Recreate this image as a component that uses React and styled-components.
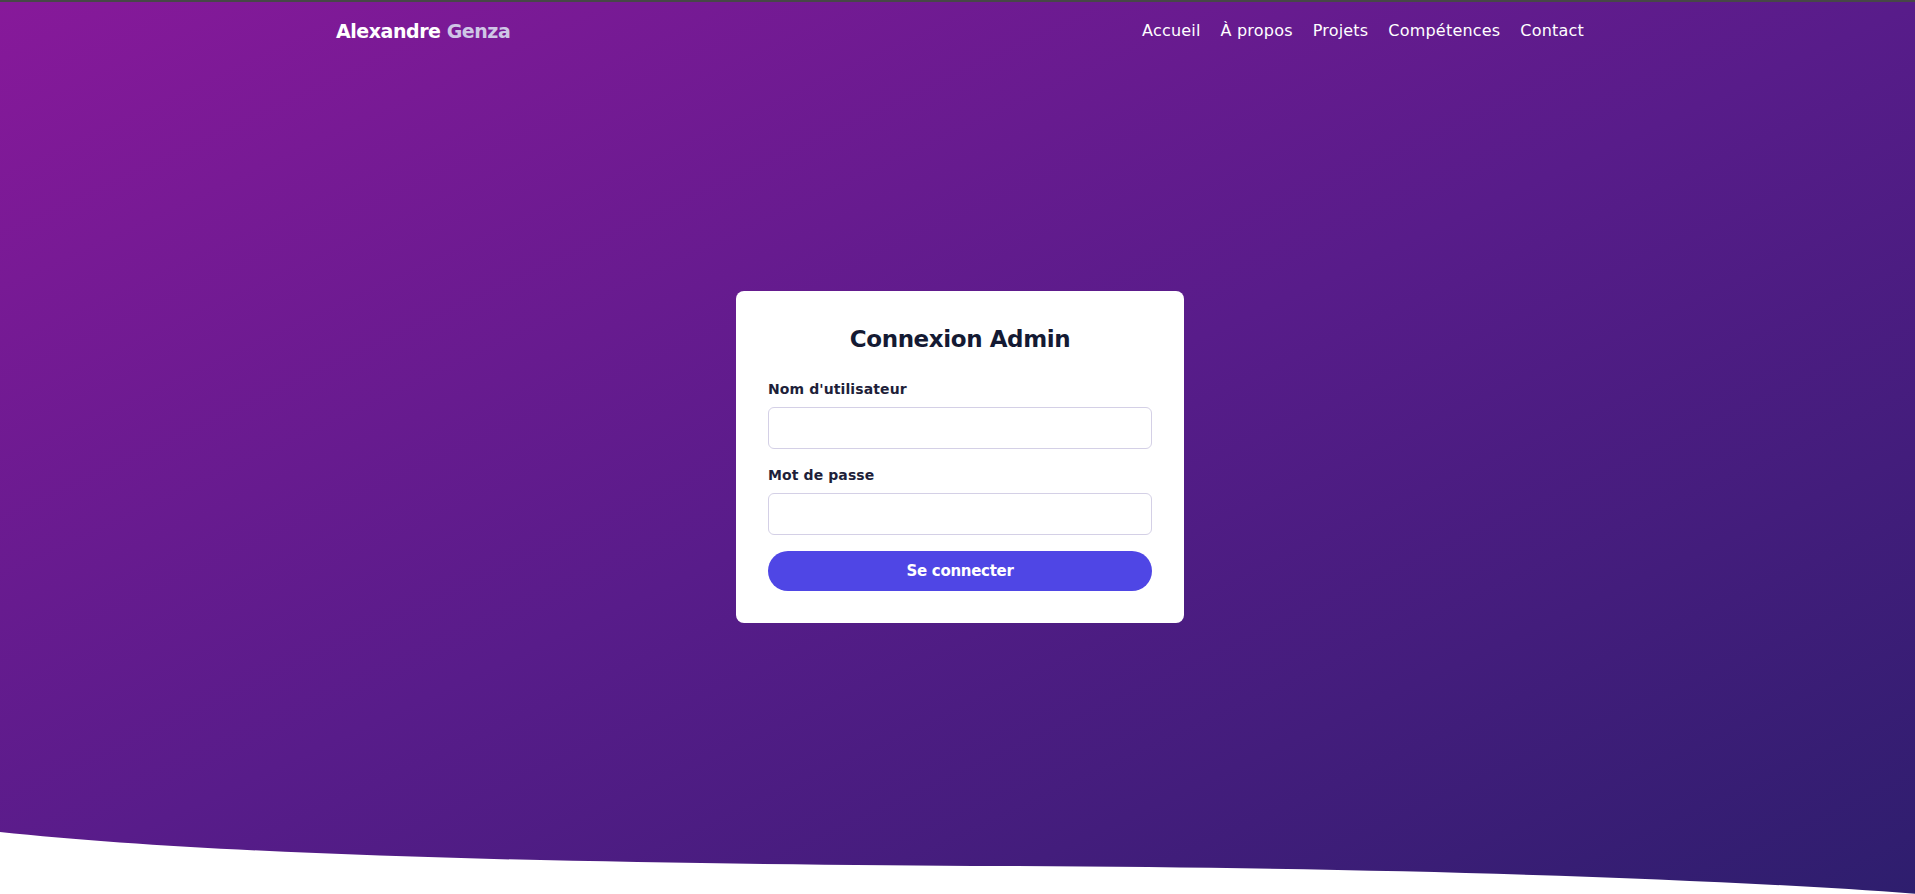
import React from 'react';
import styled, { createGlobalStyle } from 'styled-components';

const NAV_ITEMS = ['Accueil', 'À propos', 'Projets', 'Compétences', 'Contact'];

const GlobalStyle = createGlobalStyle`
  * { box-sizing: border-box; }
  html, body { margin: 0; padding: 0; background: #ffffff; }
  body {
    font-family: "DejaVu Sans", "Noto Sans", sans-serif;
    overflow: hidden;
  }
`;

const App = () => {
  return (
    <>
      <GlobalStyle />
      <Hero>
        <Header>
          <Logo>
            Alexandre <LogoAccent>Genza</LogoAccent>
          </Logo>
          <Nav>
            {NAV_ITEMS.map((item) => (
              <NavLink href="#" key={item}>
                {item}
              </NavLink>
            ))}
          </Nav>
        </Header>
        <Main>
          <Card>
            <Title>Connexion Admin</Title>
            <Field>
              <Label htmlFor="username">Nom d'utilisateur</Label>
              <Input id="username" type="text" />
            </Field>
            <Field>
              <Label htmlFor="password">Mot de passe</Label>
              <Input id="password" type="password" />
            </Field>
            <SubmitButton type="button">Se connecter</SubmitButton>
          </Card>
        </Main>
        <Wave viewBox="0 0 1920 62" preserveAspectRatio="none">
          <path
            d="M0,0 C260,28 700,32 1000,34 C1400,36 1700,46 1920,62 L1920,62 L0,62 Z"
            fill="#ffffff"
          />
        </Wave>
      </Hero>
    </>
  );
};

// laid out on a 1920px canvas, the reference was taken that way
const Hero = styled.section`
  position: relative;
  width: 1920px;
  height: 894px;
  display: flex;
  flex-direction: column;
  border-top: 2px solid #474747;
  background: linear-gradient(to bottom right, #87199a 0%, #581c8a 50%, #2e1e6e 100%);
`;
const Header = styled.header`
  width: 100%;
  max-width: 1280px;
  margin: 0 auto;
  padding: 15px 16px 13px;
  display: flex;
  align-items: center;
  justify-content: space-between;
`;
const Logo = styled.div`
  font-size: 19px;
  line-height: 28px;
  font-weight: 700;
  letter-spacing: -0.45px;
  color: #ffffff;
`;
const LogoAccent = styled.span`
  color: #cfc6e6;
`;
const Nav = styled.nav`
  display: flex;
  gap: 20px;
`;
const NavLink = styled.a`
  font-size: 16px;
  line-height: 24px;
  color: #ffffff;
  text-decoration: none;
  letter-spacing: 0.2px;
`;
const Main = styled.main`
  flex: 1;
  display: flex;
  justify-content: center;
  padding-top: 233px;
`;
const Card = styled.form`
  width: 448px;
  height: fit-content;
  padding: 32px;
  background: #ffffff;
  border-radius: 8px;
  display: flex;
  flex-direction: column;
`;
const Title = styled.h2`
  margin: 0 0 24px;
  text-align: center;
  font-size: 23px;
  line-height: 32px;
  font-weight: 700;
  letter-spacing: -0.4px;
  color: #141a33;
`;
const Field = styled.div`
  display: flex;
  flex-direction: column;
  margin-bottom: 16px;
`;
const Label = styled.label`
  font-size: 14px;
  line-height: 20px;
  font-weight: 600;
  letter-spacing: 0.1px;
  color: #1e1f3a;
  margin-bottom: 8px;
`;
const Input = styled.input`
  height: 42px;
  padding: 8px 12px;
  border: 1px solid #d4d0e6;
  border-radius: 6px;
  font-size: 16px;
  outline: none;
`;
const SubmitButton = styled.button`
  height: 40px;
  border: none;
  border-radius: 9999px;
  background: #4f46e5;
  color: #ffffff;
  font-family: inherit;
  font-size: 15px;
  font-weight: 700;
  letter-spacing: -0.3px;
  cursor: pointer;
`;
const Wave = styled.svg`
  position: absolute;
  left: 0;
  bottom: 0;
  width: 100%;
  height: 62px;
  display: block;
`;

export default App;
